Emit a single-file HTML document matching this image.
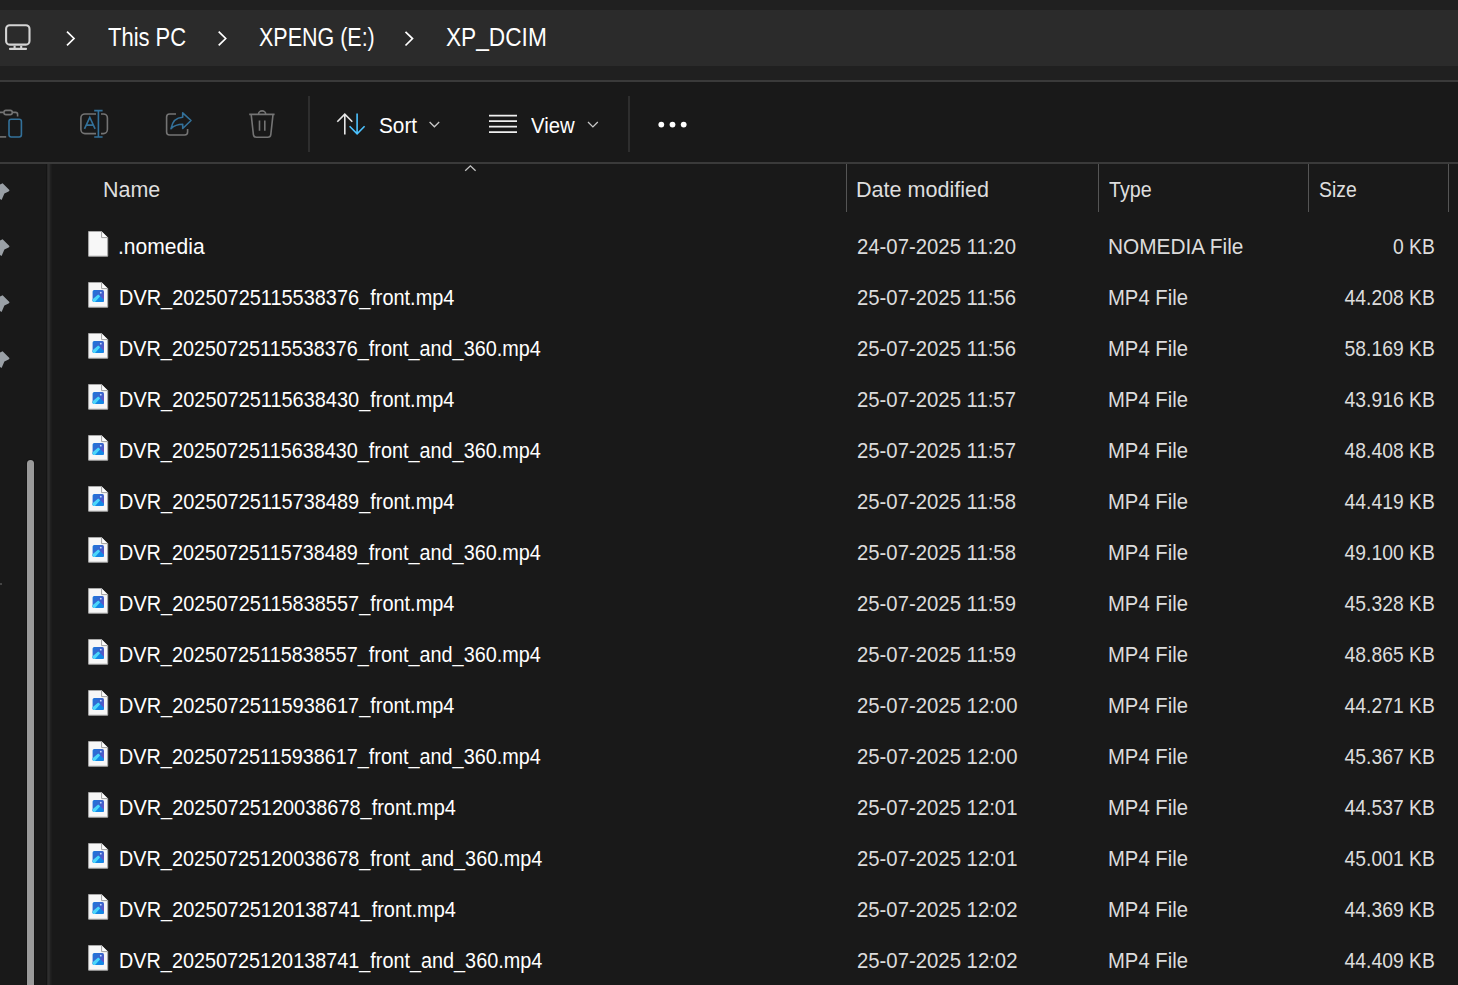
<!DOCTYPE html>
<html><head><meta charset="utf-8">
<style>
*{margin:0;padding:0;box-sizing:border-box}
html,body{width:1458px;height:985px;overflow:hidden;background:#191919;font-family:"Liberation Sans",sans-serif;color:#fff}
.a{position:absolute}
#top{left:0;top:0;width:1458px;height:80px;background:#202020}
#crumb{left:0;top:10px;width:1458px;height:56px;background:#2b2b2b}
#line1{left:0;top:80px;width:1458px;height:2px;background:#3a3a3a}
#line2{left:0;top:162px;width:1458px;height:2px;background:#3a3a3a}
.bc{position:absolute;top:9px;height:56px;line-height:56px;font-size:26px;color:#fff;white-space:nowrap;transform-origin:0 50%}
.tb{position:absolute;font-size:21.6px;line-height:21px;color:#fff;white-space:nowrap;transform-origin:0 50%}
.sep{position:absolute;top:96px;width:2px;height:56px;background:#2e2e2e}
.hd{position:absolute;top:179px;font-size:21.6px;line-height:21px;color:#dedede;white-space:nowrap;transform-origin:0 50%}
.cd{position:absolute;top:164px;width:1px;height:48px;background:#555}
.row{position:absolute;left:0;width:1458px;height:51px}
.row span{position:absolute;top:7px;font-size:21.6px;line-height:21px;white-space:nowrap;transform-origin:0 50%}
.row .ic{position:absolute;left:87px;top:0px}
.n{left:119px;color:#fff}
.n0{transform:scaleX(0.975);margin-left:-1px}
.n1{transform:scaleX(0.923)}
.n2{transform:scaleX(0.918)}
.d{left:857px;color:#dcdcdc;transform:scaleX(0.941)}
.t{left:1108px;color:#dcdcdc}
.t0{transform:scaleX(0.9646)}
.t1{transform:scaleX(0.938)}
.row span.s{right:23px;color:#dcdcdc;transform:scaleX(0.895);transform-origin:100% 50%}
</style></head><body>
<svg width="0" height="0" style="position:absolute">
<defs>
<linearGradient id="g1" x1="0" y1="0" x2="1" y2="0.9"><stop offset="0" stop-color="#1b78dc"/><stop offset="0.55" stop-color="#3c62cc"/><stop offset="1" stop-color="#7a4cbc"/></linearGradient>
<symbol id="fblank" viewBox="0 0 22 28"><path d="M1.6 2.5H14.6L20.7 8.6V27.2H1.6Z" fill="#f7f7f7" stroke="#a8a8a8" stroke-width="1"/><path d="M14.6 2.5V8.6H20.7" fill="#fdfdfd" stroke="#a0a0a0" stroke-width="1"/></symbol>
<symbol id="fimg" viewBox="0 0 22 28"><path d="M1.6 2.5H14.6L20.7 8.6V27.2H1.6Z" fill="#f7f7f7" stroke="#a8a8a8" stroke-width="1"/><path d="M14.6 2.5V8.6H20.7" fill="#fdfdfd" stroke="#a0a0a0" stroke-width="1"/>
<rect x="5.6" y="10.1" width="11.4" height="11.9" rx="1.6" fill="url(#g1)"/>
<path d="M5.6 19.6L11.4 14.6L17 19.8V20.4A1.6 1.6 0 0 1 15.4 22H7.2A1.6 1.6 0 0 1 5.6 20.4Z" fill="#1388e6"/>
<path d="M5.6 19.2L11.2 14.4L13.2 16.2L8 22H7.2A1.6 1.6 0 0 1 5.6 20.4Z" fill="#4cd6fa"/>
<circle cx="13.8" cy="12.7" r="0.9" fill="#c9d6ff"/>
</symbol>
</defs></svg>
<div id="top" class="a"></div>
<div id="crumb" class="a"></div>
<div id="line1" class="a"></div>
<div id="line2" class="a"></div>
<div class="bc" style="left:108px;transform:scaleX(0.845)">This PC</div>
<div class="bc" style="left:259px;transform:scaleX(0.826)">XPENG (E:)</div>
<div class="bc" style="left:446px;transform:scaleX(0.872)">XP_DCIM</div>
<div class="sep" style="left:308px"></div>
<div class="sep" style="left:628px"></div>
<div class="tb" style="left:379px;top:115px;transform:scaleX(0.962)">Sort</div>
<div class="tb" style="left:531px;top:115px;transform:scaleX(0.94)">View</div>
<div class="hd" style="left:103px;transform:scaleX(0.994)">Name</div>
<div class="hd" style="left:856px;transform:scaleX(0.999)">Date modified</div>
<div class="hd" style="left:1109px;transform:scaleX(0.911)">Type</div>
<div class="hd" style="left:1319px;transform:scaleX(0.898)">Size</div>
<div class="cd" style="left:846px"></div>
<div class="cd" style="left:1098px"></div>
<div class="cd" style="left:1308px"></div>
<div class="cd" style="left:1448px"></div>
<div class="a" style="left:46px;top:164px;width:6px;height:821px;background:linear-gradient(90deg,#141414 0,#141414 1px,#272727 1px,#272727 2px,#2e2e2e 2px,#2e2e2e 3px,#2a2a2a 3px,#2a2a2a 4px,#212121 4px,#212121 5px,#1d1d1d 5px)"></div>
<div class="a" style="left:27px;top:460px;width:7px;height:525px;background:#9a9a9a;border-radius:3.5px 3.5px 0 0;box-shadow:0 0 0 1px #141414"></div>
<div class="a" style="left:0;top:583px;width:2px;height:2px;background:#444"></div>
<svg class="a" style="left:0;top:0" width="1458" height="985" viewBox="0 0 1458 985" fill="none">
<!-- monitor -->
<rect x="6.1" y="25.3" width="23.4" height="19.3" rx="3.6" stroke="#d4d4d4" stroke-width="2.1"/>
<path d="M14.6 45.8V48.6M21.2 45.8V48.6" stroke="#d4d4d4" stroke-width="2.1"/><path d="M10 48.9H26" stroke="#d4d4d4" stroke-width="2.1" stroke-linecap="round"/>
<!-- chevrons -->
<path d="M67 31.6L74 38.5L67 45.4" stroke="#fff" stroke-width="1.7"/>
<path d="M218.7 31.6L225.7 38.5L218.7 45.4" stroke="#fff" stroke-width="1.7"/>
<path d="M405.5 31.8L412.5 38.6L405.5 45.5" stroke="#fff" stroke-width="1.7"/>
<!-- paste -->
<path d="M0 112.4H3.6M12.2 112.4H15.6A2 2 0 0 1 17.6 114.4V116.6" stroke="#747474" stroke-width="1.6"/>
<rect x="3.9" y="110.4" width="8.4" height="4.2" rx="2.1" stroke="#747474" stroke-width="1.6"/>
<path d="M0 136.9H6.2" stroke="#747474" stroke-width="1.6"/>
<rect x="9" y="119.2" width="12.4" height="17.8" rx="2.2" stroke="#33719a" stroke-width="1.6"/>
<!-- rename -->
<path d="M96 114H84.9A4 4 0 0 0 80.9 118V129.6A4 4 0 0 0 84.9 133.6H96M101 114H103.4A4 4 0 0 1 107.4 118V129.6A4 4 0 0 1 103.4 133.6H101" stroke="#747474" stroke-width="1.6"/>
<path d="M84.5 128.8L89.8 117.3L95.1 128.8M86.3 125.1H93.3" stroke="#33719a" stroke-width="1.6"/>
<path d="M98.4 110.6V137M94.2 110.6H102.6M94.2 137H102.6" stroke="#33719a" stroke-width="1.6"/>
<!-- share -->
<path d="M176 114H169.6A3 3 0 0 0 166.6 117V132A3 3 0 0 0 169.6 135H184.6A3 3 0 0 0 187.6 132V129" stroke="#747474" stroke-width="1.6"/>
<path d="M171 128.6C172.3 121.3 176.6 117.4 182.7 117.2V112.8L191 120.5L182.7 128.5V124.2C177.6 124.2 173.8 125.8 171 128.6Z" stroke="#33719a" stroke-width="1.6" stroke-linejoin="round"/>
<!-- trash -->
<path d="M249.2 114.4H274.6M251.2 114.6L253.4 134.6A3 3 0 0 0 256.4 137.2H267.8A3 3 0 0 0 270.8 134.6L273 114.6M258.5 114V114A3.6 3.1 0 0 1 265.7 114V114M259.5 120.6V130.8M264.8 120.6V130.8" stroke="#747474" stroke-width="1.6"/>
<!-- sort -->
<path d="M344.8 134.4V114.2M337.3 121.7L344.8 114.2L352.3 121.7" stroke="#e6e6e6" stroke-width="1.6"/>
<path d="M357.1 113.6V133.8M349.6 126.3L357.1 133.8L364.6 126.3" stroke="#4cc2ff" stroke-width="1.6"/>
<path d="M429.6 122L434.4 126.8L439.2 122" stroke="#c8c8c8" stroke-width="1.3"/>
<!-- view -->
<path d="M489 115.6H517M489 121.1H517M489 126.6H517M489 132.1H517" stroke="#f0f0f0" stroke-width="1.7"/>
<path d="M588 122L592.9 126.9L597.8 122" stroke="#c8c8c8" stroke-width="1.3"/>
<circle cx="661.3" cy="124.6" r="2.9" fill="#fff"/>
<circle cx="672.5" cy="124.6" r="2.9" fill="#fff"/>
<circle cx="683.7" cy="124.6" r="2.9" fill="#fff"/>
<!-- header caret -->
<path d="M465.2 170.8L470.4 165.8L475.6 170.8" stroke="#c4c4c4" stroke-width="1.3"/>
<!-- pins -->
<g fill="#9aa0a6">
<path d="M0 184.6L2.6 183.2L9.6 190.2L8.6 191.6L4.4 193.6L1.6 200L0 199Z"/>
<path d="M0 240.6L2.6 239.2L9.6 246.2L8.6 247.6L4.4 249.6L1.6 256L0 255Z"/>
<path d="M0 296.6L2.6 295.2L9.6 302.2L8.6 303.6L4.4 305.6L1.6 312L0 311Z"/>
<path d="M0 352.6L2.6 351.2L9.6 358.2L8.6 359.6L4.4 361.6L1.6 368L0 367Z"/>
</g>
</svg>
<div class="row" style="top:229px"><svg class="ic" width="22" height="28"><use href="#fblank"/></svg><span class="n n0">.nomedia</span><span class="d">24-07-2025 11:20</span><span class="t t0">NOMEDIA File</span><span class="s">0 KB</span></div>
<div class="row" style="top:280px"><svg class="ic" width="22" height="28"><use href="#fimg"/></svg><span class="n n1">DVR_20250725115538376_front.mp4</span><span class="d">25-07-2025 11:56</span><span class="t t1">MP4 File</span><span class="s">44.208 KB</span></div>
<div class="row" style="top:331px"><svg class="ic" width="22" height="28"><use href="#fimg"/></svg><span class="n n2">DVR_20250725115538376_front_and_360.mp4</span><span class="d">25-07-2025 11:56</span><span class="t t1">MP4 File</span><span class="s">58.169 KB</span></div>
<div class="row" style="top:382px"><svg class="ic" width="22" height="28"><use href="#fimg"/></svg><span class="n n1">DVR_20250725115638430_front.mp4</span><span class="d">25-07-2025 11:57</span><span class="t t1">MP4 File</span><span class="s">43.916 KB</span></div>
<div class="row" style="top:433px"><svg class="ic" width="22" height="28"><use href="#fimg"/></svg><span class="n n2">DVR_20250725115638430_front_and_360.mp4</span><span class="d">25-07-2025 11:57</span><span class="t t1">MP4 File</span><span class="s">48.408 KB</span></div>
<div class="row" style="top:484px"><svg class="ic" width="22" height="28"><use href="#fimg"/></svg><span class="n n1">DVR_20250725115738489_front.mp4</span><span class="d">25-07-2025 11:58</span><span class="t t1">MP4 File</span><span class="s">44.419 KB</span></div>
<div class="row" style="top:535px"><svg class="ic" width="22" height="28"><use href="#fimg"/></svg><span class="n n2">DVR_20250725115738489_front_and_360.mp4</span><span class="d">25-07-2025 11:58</span><span class="t t1">MP4 File</span><span class="s">49.100 KB</span></div>
<div class="row" style="top:586px"><svg class="ic" width="22" height="28"><use href="#fimg"/></svg><span class="n n1">DVR_20250725115838557_front.mp4</span><span class="d">25-07-2025 11:59</span><span class="t t1">MP4 File</span><span class="s">45.328 KB</span></div>
<div class="row" style="top:637px"><svg class="ic" width="22" height="28"><use href="#fimg"/></svg><span class="n n2">DVR_20250725115838557_front_and_360.mp4</span><span class="d">25-07-2025 11:59</span><span class="t t1">MP4 File</span><span class="s">48.865 KB</span></div>
<div class="row" style="top:688px"><svg class="ic" width="22" height="28"><use href="#fimg"/></svg><span class="n n1">DVR_20250725115938617_front.mp4</span><span class="d">25-07-2025 12:00</span><span class="t t1">MP4 File</span><span class="s">44.271 KB</span></div>
<div class="row" style="top:739px"><svg class="ic" width="22" height="28"><use href="#fimg"/></svg><span class="n n2">DVR_20250725115938617_front_and_360.mp4</span><span class="d">25-07-2025 12:00</span><span class="t t1">MP4 File</span><span class="s">45.367 KB</span></div>
<div class="row" style="top:790px"><svg class="ic" width="22" height="28"><use href="#fimg"/></svg><span class="n n1">DVR_20250725120038678_front.mp4</span><span class="d">25-07-2025 12:01</span><span class="t t1">MP4 File</span><span class="s">44.537 KB</span></div>
<div class="row" style="top:841px"><svg class="ic" width="22" height="28"><use href="#fimg"/></svg><span class="n n2">DVR_20250725120038678_front_and_360.mp4</span><span class="d">25-07-2025 12:01</span><span class="t t1">MP4 File</span><span class="s">45.001 KB</span></div>
<div class="row" style="top:892px"><svg class="ic" width="22" height="28"><use href="#fimg"/></svg><span class="n n1">DVR_20250725120138741_front.mp4</span><span class="d">25-07-2025 12:02</span><span class="t t1">MP4 File</span><span class="s">44.369 KB</span></div>
<div class="row" style="top:943px"><svg class="ic" width="22" height="28"><use href="#fimg"/></svg><span class="n n2">DVR_20250725120138741_front_and_360.mp4</span><span class="d">25-07-2025 12:02</span><span class="t t1">MP4 File</span><span class="s">44.409 KB</span></div>
</body></html>
